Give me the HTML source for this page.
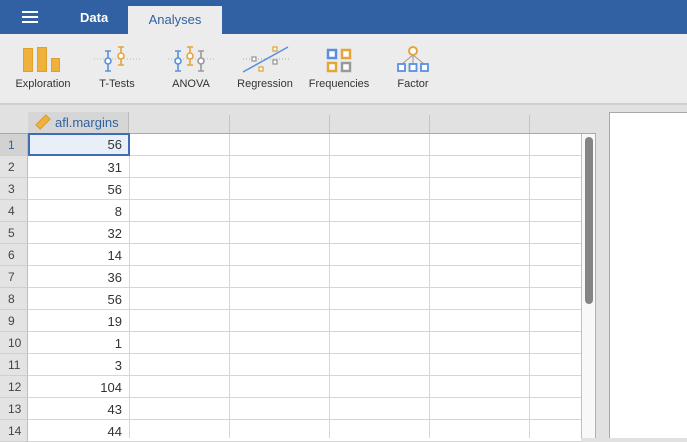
<!DOCTYPE html>
<html><head><style>
*{margin:0;padding:0;box-sizing:border-box}
body{width:687px;height:438px;overflow:hidden;background:#e1e1e1;font-family:"Liberation Sans",sans-serif;position:relative}
.a{position:absolute}
#hdr{left:0;top:0;width:687px;height:34px;background:#3161a3}
#tb{left:0;top:34px;width:687px;height:71px;background:#ececec;border-bottom:2px solid #cfcfcf}
.lbl{font-size:11px;color:#333;text-align:center;width:80px}
.rn{left:0;width:28px;height:22px;background:#e3e3e3;border-bottom:1px solid #cfcfcf;border-right:1px solid #bdbdbd;font-size:12px;color:#444;padding:4px 0 0 8px}
.row{left:28px;width:553px;height:22px;background:#fff;border-bottom:1px solid #d6d6d6}
.v{font-size:13px;color:#333;text-align:right;width:100px;left:28px;padding-right:6px}
</style></head><body>
<div id="hdr" class="a"></div>
<div class="a" style="left:22px;top:11px;width:16px;height:2px;background:#fff;box-shadow:0 5px 0 #fff,0 10px 0 #fff"></div>
<div class="a" style="left:80px;top:10px;color:#fff;font-size:13px;font-weight:bold">Data</div>
<div class="a" style="left:128px;top:6px;width:94px;height:28px;background:#ececec;color:#3161a3;font-size:13px;text-align:center;padding-top:6px">Analyses</div>
<div id="tb" class="a"></div>
<svg class="a" style="left:0;top:34px" width="460" height="40">
<g fill="#f0b13c" stroke="#e0a030"><rect x="23.5" y="14.5" width="9" height="23"/><rect x="37.5" y="13.5" width="9" height="24"/><rect x="51.5" y="24.5" width="8" height="13"/></g>
<line x1="94" y1="25" x2="140" y2="25" stroke="#bbb" stroke-dasharray="1 2"/>
<g fill="none" stroke-width="1.6"><path d="M108 17v20M105 17h6M105 37h6" stroke="#5a8fe0"/><circle cx="108" cy="27" r="3" fill="#fff" stroke="#5a8fe0"/>
<path d="M121 13v18M118 13h6M118 31h6" stroke="#e6a43a"/><circle cx="121" cy="22" r="3" fill="#fff" stroke="#e6a43a"/></g>
<line x1="168" y1="25" x2="214" y2="25" stroke="#bbb" stroke-dasharray="1 2"/>
<g fill="none" stroke-width="1.6"><path d="M178 17v20M175 17h6M175 37h6" stroke="#5a8fe0"/><circle cx="178" cy="27" r="3" fill="#fff" stroke="#5a8fe0"/>
<path d="M190 13v18M187 13h6M187 31h6" stroke="#e6a43a"/><circle cx="190" cy="22" r="3" fill="#fff" stroke="#e6a43a"/>
<path d="M201 17v20M198 17h6M198 37h6" stroke="#999"/><circle cx="201" cy="27" r="3" fill="#fff" stroke="#999"/></g>
<line x1="243" y1="25" x2="290" y2="25" stroke="#aaa" stroke-dasharray="1 2"/>
<line x1="243" y1="38" x2="288" y2="13" stroke="#5a8fe0" stroke-width="1.5"/>
<g fill="#fff" stroke-width="1.3"><rect x="252" y="23" width="4" height="4" stroke="#999"/><rect x="273" y="26" width="4" height="4" stroke="#999"/><rect x="273" y="13" width="4" height="4" stroke="#e6a43a"/><rect x="259" y="33" width="4" height="4" stroke="#e6a43a"/></g>
<g stroke-width="2.5" fill="#fff"><rect x="328" y="16" width="8" height="8" stroke="#5a8fe0"/><rect x="342" y="16" width="8" height="8" stroke="#e6a43a"/><rect x="328" y="29" width="8" height="8" stroke="#e6a43a"/><rect x="342" y="29" width="8" height="8" stroke="#999"/></g>
<g fill="none" stroke="#999"><path d="M413 21v9M413 21l-11 9M413 21l11 9"/></g>
<circle cx="413" cy="17" r="4" fill="#fff" stroke="#e6a43a" stroke-width="2"/>
<g fill="#fff" stroke="#5a8fe0" stroke-width="1.8"><rect x="398" y="30" width="7" height="7"/><rect x="409.5" y="30" width="7" height="7"/><rect x="421" y="30" width="7" height="7"/></g>
</svg>
<div class="a lbl" style="left:3px;top:78px">Exploration</div>
<div class="a lbl" style="left:77px;top:78px">T-Tests</div>
<div class="a lbl" style="left:151px;top:78px">ANOVA</div>
<div class="a lbl" style="left:225px;top:78px">Regression</div>
<div class="a lbl" style="left:299px;top:78px">Frequencies</div>
<div class="a lbl" style="left:373px;top:78px">Factor</div>
<div class="a" style="left:0;top:112px;width:596px;height:22px;background:#e1e1e1;border-bottom:1px solid #a8a8a8"></div>
<div class="a" style="left:28px;top:112px;width:101px;height:21px;background:#d6d6d6;border-right:1px solid #bbb;color:#3161a3;font-size:13px;padding:3px 0 0 27px">afl.margins</div>
<svg class="a" style="left:35px;top:114px" width="16" height="16"><g transform="rotate(-45 8 8)"><rect x="1" y="5" width="14" height="6" fill="#f0b13c" stroke="#d99a2a"/></g></svg>
<div class="a" style="left:229px;top:115px;width:1px;height:18px;background:#c4c4c4"></div>
<div class="a" style="left:329px;top:115px;width:1px;height:18px;background:#c4c4c4"></div>
<div class="a" style="left:429px;top:115px;width:1px;height:18px;background:#c4c4c4"></div>
<div class="a" style="left:529px;top:115px;width:1px;height:18px;background:#c4c4c4"></div>
<div id="rows"></div>
<div class="a" style="left:129px;top:134px;width:1px;height:304px;background:#d6d6d6"></div>
<div class="a" style="left:229px;top:134px;width:1px;height:304px;background:#d6d6d6"></div>
<div class="a" style="left:329px;top:134px;width:1px;height:304px;background:#d6d6d6"></div>
<div class="a" style="left:429px;top:134px;width:1px;height:304px;background:#d6d6d6"></div>
<div class="a" style="left:529px;top:134px;width:1px;height:304px;background:#d6d6d6"></div>
<div class="a" style="left:28px;top:133px;width:102px;height:23px;background:#e9eff8;border:2px solid #3e6db5"></div>
<div class="a v" style="top:137px">56</div>
<div class="a" style="left:581px;top:134px;width:15px;height:304px;background:#f8f8f8;border-left:1px solid #c0c0c0;border-right:1px solid #b0b0b0"></div>
<div class="a" style="left:585px;top:137px;width:8px;height:167px;background:#858585;border-radius:4px"></div>
<div class="a" style="left:609px;top:112px;width:78px;height:326px;background:#fff;border-left:1px solid #a8a8a8;border-top:1px solid #a8a8a8"></div>
<script>
var vals=[56,31,56,8,32,14,36,56,19,1,3,104,43,44],h='';
for(var i=0;i<14;i++){var t=134+i*22;
h+='<div class="a rn" style="top:'+t+'px;'+(i==0?'background:#d2d2d2;color:#3161a3':'')+'">'+(i+1)+'</div>';
h+='<div class="a row" style="top:'+t+'px"></div>';
if(i>0)h+='<div class="a v" style="top:'+(t+4)+'px">'+vals[i]+'</div>';}
document.getElementById('rows').innerHTML=h;
</script>
</body></html>
